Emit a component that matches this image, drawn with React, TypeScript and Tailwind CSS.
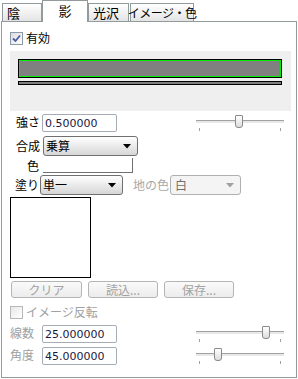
import React from "react";

const jp = { fontFamily: '"Noto Sans CJK JP", "Liberation Sans", sans-serif' };

function Tab({ label, active, w }: { label: string; active?: boolean; w: string }) {
  if (active) {
    return (
      <div
        className={`${w} relative z-10 -mb-px flex h-[22px] items-start justify-center whitespace-nowrap border border-b-0 border-[#919b9c] bg-white pt-[2px] text-[13px] leading-[16px] text-black`}
      >
        {label}
      </div>
    );
  }
  return (
    <div
      className={`${w} flex h-[18px] items-center whitespace-nowrap border border-b-0 border-[#919b9c] bg-gradient-to-b from-white to-[#e4e4e4] pl-[4px] text-[13px] leading-[16px] text-black`}
    >
      {label}
    </div>
  );
}

function Slider({ pos }: { pos: number }) {
  return (
    <div className="relative h-[18px] w-[88px]">
      <div className="absolute left-0 right-0 top-[5px] h-[3px] border-t border-[#a0a0a0] bg-[#e8e8e8]" />
      <div
        className="absolute top-0 h-[13px] w-[8px] rounded-b-[3px] rounded-t-[1px] border border-[#8a8a8a] bg-gradient-to-b from-white to-[#dcdcdc]"
        style={{ left: pos }}
      />
      <div className="absolute left-[3px] top-[13px] h-[3px] w-px bg-[#a0a0a0]" />
      <div className="absolute right-[3px] top-[13px] h-[3px] w-px bg-[#a0a0a0]" />
    </div>
  );
}

function Field({ value }: { value: string }) {
  return (
    <div
      className="flex h-[18px] w-[75px] items-center rounded-[2px] border border-[#a5acb5] bg-white pl-[2px] text-[11px] leading-none text-[#1a1a40]"
      style={{ fontFamily: '"DejaVu Sans", sans-serif' }}
    >
      {value}
    </div>
  );
}

function Arrow({ color }: { color: string }) {
  return (
    <svg width="8" height="5" viewBox="0 0 8 5">
      <path d="M0 0H8L4 4.5Z" fill={color} />
    </svg>
  );
}

function Btn({ label, w }: { label: string; w: string }) {
  return (
    <div className={`${w} flex h-[17px] items-center justify-center rounded-[3px] border border-[#b4b4b4] bg-gradient-to-b from-[#fafafa] to-[#ececec] text-[12px] leading-none text-[#a3a3a3]`}>
      {label}
    </div>
  );
}

export default function App() {
  return (
    <div className="h-[379px] w-[298px] overflow-hidden bg-white" style={jp}>
      <div className="flex items-end pl-[2px]">
        <Tab label="陰" w="w-[40px]" />
        <Tab label="影" w="w-[46px]" active />
        <Tab label="光沢" w="w-[41px]" />
        <div className="w-[1px]" />
        <div className="flex h-[18px] w-[64px] items-center justify-center whitespace-nowrap border border-b-0 border-[#919b9c] bg-gradient-to-b from-white to-[#e4e4e4] text-[12px] leading-[16px] tracking-[-0.5px] text-black">
          イメージ・色
        </div>
      </div>

      <div className="ml-[1px] h-[357px] w-[296px] border border-[#919b9c] bg-white">
        <div className="ml-[8px] mt-[9px] flex items-center gap-[3px]">
          <div className="flex h-[13px] w-[13px] items-center justify-center border border-[#8a9aa8] bg-gradient-to-br from-[#dcdcdc] to-white">
            <svg width="9" height="9" viewBox="0 0 9 9">
              <path d="M1 4.5L3.5 7L8 1.5" stroke="#4a5fa8" strokeWidth="1.8" fill="none" />
            </svg>
          </div>
          <span className="text-[12px] leading-[14px]">有効</span>
        </div>

        <div className="ml-[8px] mt-[6px] h-[60px] w-[281px] bg-[#efefef] pl-[8px] pt-[8px]">
          <div className="h-[19px] w-[264px] border border-black">
            <div className="h-full w-full border border-[#00ee00] bg-[#808080]" />
          </div>
          <div className="mt-[3px] h-[4px] w-[264px] border border-black bg-[#808080]" />
        </div>

        <div className="mt-[3px] flex items-start">
          <span className="ml-[14px] mt-[1px] w-[26px] text-[12px] leading-[14px]">強さ</span>
          <Field value="0.500000" />
          <div className="ml-[79px] mt-[1px]">
            <Slider pos={39} />
          </div>
        </div>

        <div className="mt-[3px] flex items-center">
          <span className="ml-[14px] w-[27px] text-[12px] leading-[14px]">合成</span>
          <div className="flex h-[20px] w-[95px] items-center justify-between rounded-[3px] border border-[#707070] bg-gradient-to-b from-white to-[#d6d6d6] pl-[2px] pr-[6px] text-[12px] leading-none">
            <span>乗算</span>
            <Arrow color="#000" />
          </div>
        </div>

        <div className="mt-[2px] flex items-end">
          <span className="ml-[25px] w-[16px] text-[12px] leading-[14px]">色</span>
          <div className="h-[15px] w-[90px] border-b border-r border-[#707070]" />
        </div>

        <div className="mt-[2px] flex items-center">
          <span className="ml-[13px] w-[25px] text-[12px] leading-[14px]">塗り</span>
          <div className="flex h-[20px] w-[83px] items-center justify-between rounded-[3px] border border-[#707070] bg-gradient-to-b from-white to-[#d6d6d6] pl-[2px] pr-[6px] text-[12px] leading-none">
            <span>単一</span>
            <Arrow color="#000" />
          </div>
          <span className="ml-[10px] w-[37px] text-[12px] leading-[14px] text-[#a8a8a8]">地の色</span>
          <div className="flex h-[20px] w-[71px] items-center justify-between rounded-[3px] border border-[#b0b0b0] bg-[#f4f4f4] pl-[4px] pr-[6px] text-[12px] leading-none text-[#707070]">
            <span>白</span>
            <Arrow color="#a0a0a0" />
          </div>
        </div>

        <div className="ml-[8px] mt-[2px] h-[81px] w-[81px] border border-black bg-white" />

        <div className="ml-[9px] mt-[3px] flex gap-[6px]">
          <Btn label="クリア" w="w-[71px]" />
          <Btn label="読込..." w="w-[70px]" />
          <Btn label="保存..." w="w-[70px]" />
        </div>

        <div className="ml-[8px] mt-[7px] flex items-center gap-[3px]">
          <div className="h-[13px] w-[13px] border border-[#b8b8b8] bg-gradient-to-br from-[#e8e8e8] to-white" />
          <span className="text-[12px] leading-[14px] text-[#a0a0a0]">イメージ反転</span>
        </div>

        <div className="mt-[6px] flex items-start">
          <span className="ml-[8px] mt-[1px] w-[32px] text-[12px] leading-[14px] text-[#a0a0a0]">線数</span>
          <Field value="25.000000" />
          <div className="ml-[79px] mt-[1px]">
            <Slider pos={66} />
          </div>
        </div>

        <div className="mt-[3px] flex items-start">
          <span className="ml-[8px] mt-[1px] w-[32px] text-[12px] leading-[14px] text-[#a0a0a0]">角度</span>
          <Field value="45.000000" />
          <div className="ml-[79px] mt-[1px]">
            <Slider pos={18} />
          </div>
        </div>
      </div>
    </div>
  );
}
